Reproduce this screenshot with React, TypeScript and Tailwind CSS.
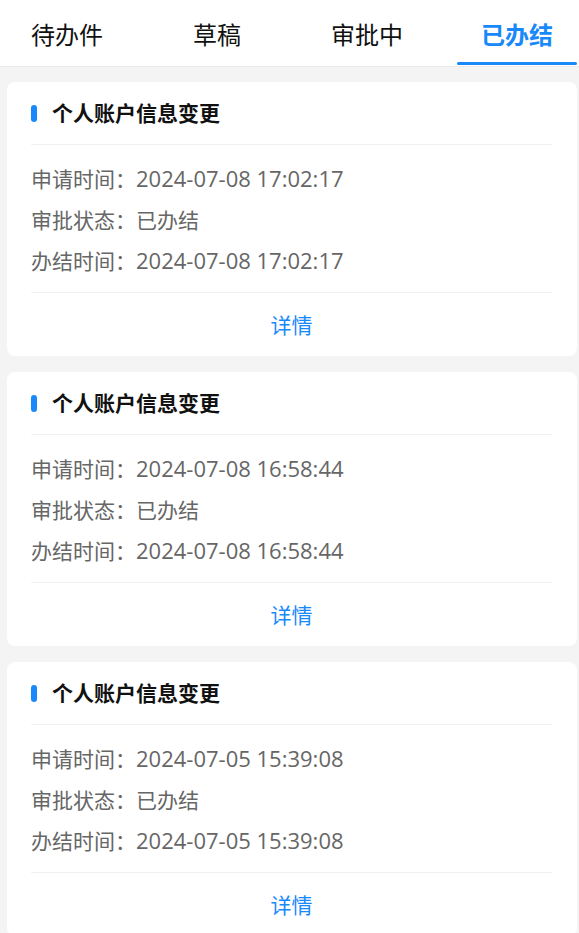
const tabs = ["待办件", "草稿", "审批中", "已办结"];

const records = [
  { apply: "2024-07-08 17:02:17", done: "2024-07-08 17:02:17" },
  { apply: "2024-07-08 16:58:44", done: "2024-07-08 16:58:44" },
  { apply: "2024-07-05 15:39:08", done: "2024-07-05 15:39:08" },
];

export default function App() {
  return (
    <div
      className="min-h-[933px] bg-[#f4f4f4]"
      style={{ fontFamily: '"Noto Sans CJK SC", "Noto Sans", sans-serif' }}
    >
      {/* Tabs */}
      <div className="h-[67px] bg-white border-b border-[#ebebeb] overflow-hidden">
        <div className="flex -ml-2 h-full">
          {tabs.map((t, i) => (
            <div key={t} className="w-[150px] shrink-0 flex flex-col items-center justify-center relative h-full pt-[2px]">
              <span
                className={
                  i === 3
                    ? "text-[24px] font-bold text-[#1989fa]"
                    : "text-[24px] text-[#111]"
                }
              >
                {t}
              </span>
              {i === 3 && (
                <div className="absolute bottom-[1px] left-[15px] right-[15px] h-[3px] rounded-full bg-[#1989fa]" />
              )}
            </div>
          ))}
        </div>
      </div>

      {/* Cards */}
      <div className="flex flex-col gap-4 pl-[7px] pr-[2px] pt-[15px] pb-4">
        {records.map((r, i) => (
          <div key={i} className="bg-white rounded-lg pl-6 pr-[25px]">
            <div className="h-[63px] flex items-center gap-[15px] border-b border-[#f2f2f2]">
              <div className="w-[6px] h-[17px] rounded-full bg-[#1989fa]" />
              <span className="text-[21px] font-bold text-[#111]">个人账户信息变更</span>
            </div>
            <div className="pt-[13px] pb-[11px] border-b border-[#f2f2f2] text-[21px] text-[#666]">
              <div className="h-[41px] flex items-center">
                申请时间：
                <span className="text-[22px]" style={{ fontFamily: '"Open Sans", sans-serif' }}>{r.apply}</span>
              </div>
              <div className="h-[41px] flex items-center">审批状态：已办结</div>
              <div className="h-[41px] flex items-center">
                办结时间：
                <span className="text-[22px]" style={{ fontFamily: '"Open Sans", sans-serif' }}>{r.done}</span>
              </div>
            </div>
            <div className="h-[63px] flex items-center justify-center text-[21px] text-[#1989fa]">
              详情
            </div>
          </div>
        ))}
      </div>
    </div>
  );
}
